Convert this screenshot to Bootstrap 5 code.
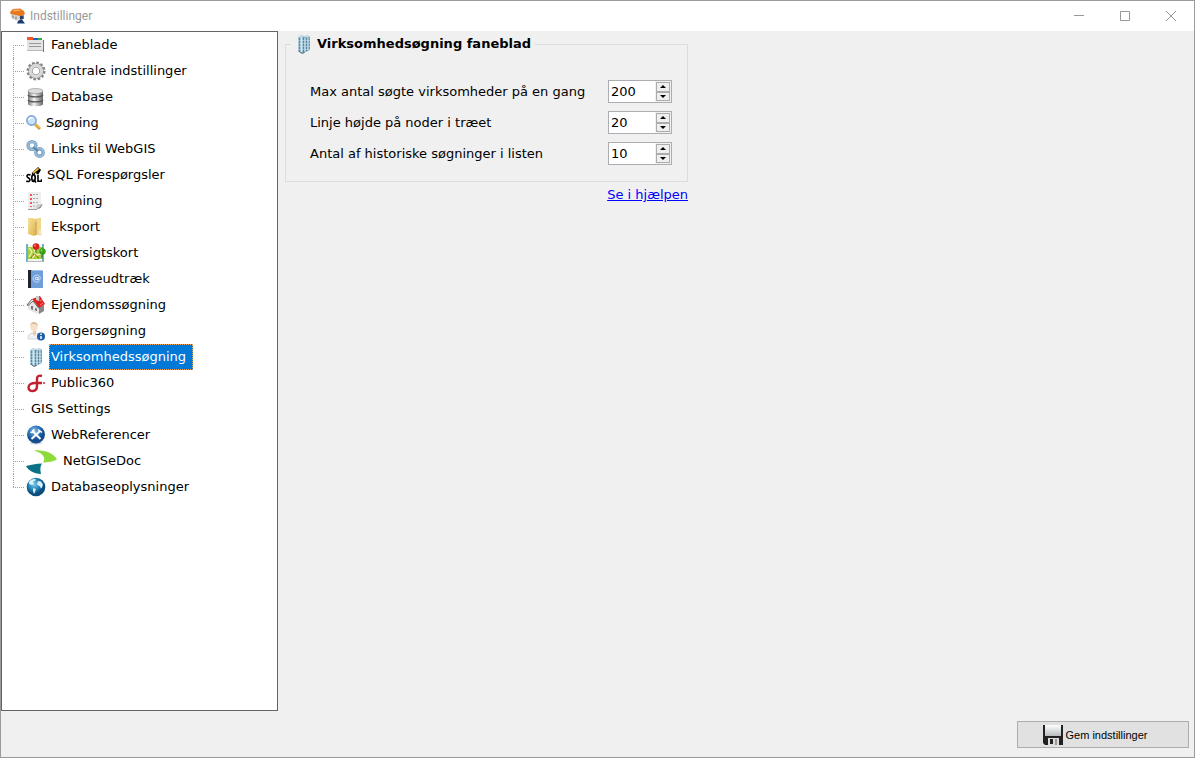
<!DOCTYPE html>
<html lang="da">
<head>
<meta charset="utf-8">
<meta name="viewport" content="width=device-width, initial-scale=1">
<title>Indstillinger</title>
<link href="https://cdn.jsdelivr.net/npm/bootstrap@5.3.0/dist/css/bootstrap.min.css" rel="stylesheet">
<style>
  body { font: 13px/23px "DejaVu Sans", sans-serif; color: #000; background: #f0f0f0; border: 1px solid #9b9b9b; }
  .titlebar { height: 30px; padding-left: 8px; font: 12px/16px Roboto, sans-serif; color: #999; }
  .titlebar h1 { font: inherit; margin: 0 0 0 4px; }
  .winbtn { width: 46px; height: 30px; padding: 0; border: 0; background: none; display: grid; place-items: center; }
  .tree { width: 277px; border: 1px solid #646464; background: #fff; }
  .tree li { height: 26px; padding-left: 24px; position: relative; }
  .tree li::before { content: ""; position: absolute; left: 11px; top: 0; height: 26px; border-left: 1px dotted #a0a0a0; }
  .tree li:first-child::before { top: 13px; height: 13px; }
  .tree li:last-child::before { height: 13px; }
  .tree li::after { content: ""; position: absolute; left: 11px; top: 13px; width: 11px; border-top: 1px dotted #a0a0a0; }
  .tree a { color: #000; text-decoration: none; margin-left: 3px; padding: 0 6px 1px 1px; border: 1px solid transparent; line-height: 23px; white-space: nowrap; }
  .tree a.active { background: #0078d7; color: #fff; border: 1px dotted #f0a050; }
  .content-pane { padding: 1px 0 0 7px; }
  .group { width: 403px; }
  .group fieldset { border: 1px solid #dcdcdc; padding: 0 15px 16px 24px; }
  .group legend { font-size: 13px; line-height: 24px; font-weight: bold; margin: 0 0 24px -19px; padding: 0 4px 0 3px; gap: 3px; }
  .spin { width: 64px; height: 23px; border: 1px solid #abadb3; background: #fff; }
  .spin input { width: 46px; border: 0; padding: 0 0 0 2px; outline: 0; background: none; line-height: 20px; appearance: textfield; -moz-appearance: textfield; }
  .spin input::-webkit-inner-spin-button { appearance: none; -webkit-appearance: none; margin: 0; }
  .spin-btns { width: 16px; padding: 1px; background: #f0f0f0; }
  .spin-btns button { border: 1px solid #acacac; background: #efefef; padding: 0; line-height: 0; display: grid; place-items: center; flex: 1; }
  .help { color: #00f; line-height: 26px; }
  .footbar { height: 46px; padding: 10px 5px 9px; }
  .save { width: 172px; border: 1px solid #adadad; background: #e1e1e1; font: 11px/16px "Liberation Sans", sans-serif; color: #000; gap: 3px; padding: 0 16px 0 0; }
</style>
</head>
<body class="vh-100 d-flex flex-column overflow-hidden">
<svg width="0" height="0" class="position-absolute" aria-hidden="true">
  <defs>
    <linearGradient id="metal"><stop offset="0" stop-color="#777"/><stop offset=".4" stop-color="#f4f4f4"/><stop offset="1" stop-color="#666"/></linearGradient>
    <linearGradient id="gold" x2="1" y2="1"><stop offset="0" stop-color="#f8e39a"/><stop offset="1" stop-color="#dcb24c"/></linearGradient>
    <linearGradient id="shine" x2="0" y2="1"><stop offset="0" stop-color="#fff"/><stop offset="1" stop-color="#b8bcbe"/></linearGradient>
    <radialGradient id="blue" cx=".4" cy=".3"><stop offset="0" stop-color="#8cc0ea"/><stop offset=".6" stop-color="#2f78bd"/><stop offset="1" stop-color="#164c8c"/></radialGradient>
    <radialGradient id="sea" cx=".4" cy=".35"><stop offset="0" stop-color="#7cc9ea"/><stop offset=".6" stop-color="#2586b8"/><stop offset="1" stop-color="#0d4d7d"/></radialGradient>
    <symbol id="towers" viewBox="0 0 20 20">
      <path d="M4 3l3-2 4 1v17l-3 .5L4 17z" fill="#a3c6d7"/><path d="M10 3l3-2 3 1.500V16l-4 2-2-1z" fill="#86b0c5"/>
      <path d="M5.500 4v13M9.500 3v15M12.500 4v13M15 4v12" stroke="#4f8199" stroke-width=".9"/>
      <path d="M7.500 4v14M11 4v13M14 4v12" stroke="#dcebf2" stroke-width=".9"/>
      <path d="M4 3l3-2 4 1-3 1.500zM10 2.500L13 1l3 1.500-3 1z" fill="#c9dde6"/>
      <path d="M4 6.500h12M4 9.500h12M4 12.500h12M4 15.500h12" stroke="#d4e5ed" stroke-width=".5"/>
      <path d="M4.500 17L8 19.300l2.500-.8" stroke="#4a6674" fill="none"/>
    </symbol>
  </defs>
</svg>

<header class="titlebar d-flex align-items-center bg-white flex-shrink-0">
  <svg width="17" height="16" viewBox="0 0 17 16"><path d="M1 4l3-3 7-.5L15 3l1 3-5 3-9-2z" fill="#e8781c"/><path d="M4 2l6-.5 2 1-7 1z" fill="#f9b168"/><path d="M2 6l9 2v5l-5-1-4-3z" fill="#d9d6cf"/><path d="M4 7.500v3M7 8.500v3" stroke="#777"/><path d="M11 8l4-1v4l-4 1z" fill="#8b817a"/><circle cx="12.500" cy="9.500" r="1.800" fill="#20406c"/><path d="M8 15.500c1-3 2-4 5-4l3 4z" fill="#173c78"/></svg>
  <h1 class="me-auto">Indstillinger</h1>
  <button class="winbtn" aria-label="Minimer"><svg width="10" height="10"><path d="M0 4.500h10" stroke="#999"/></svg></button>
  <button class="winbtn" aria-label="Maksimer"><svg width="10" height="10"><path d="M.5.5h9v9h-9z" fill="none" stroke="#999"/></svg></button>
  <button class="winbtn" aria-label="Luk"><svg width="10" height="10"><path d="M0 0l10 10M10 0L0 10" stroke="#999"/></svg></button>
</header>

<main class="d-flex flex-grow-1">
  <nav class="tree flex-shrink-0" aria-label="Indstillinger">
    <ul class="list-unstyled m-0">
      <li class="d-flex align-items-center"><svg width="20" height="20" viewBox="0 0 20 20"><path d="M1 5h16v11H1z" fill="#e4e4e4"/><path d="M1 2h6v3H1z" fill="#f0582a"/><path d="M7 3h5v2H7z" fill="#1e62c8"/><path d="M12 3h4v2h-4z" fill="#2fae48"/><path d="M3 8.500h12M3 11.500h12" stroke="#999"/><path d="M1 15.500h16" stroke="#bbb"/><path d="M17.500 5v12" stroke="#777"/></svg><a href="#">Faneblade</a></li>
      <li class="d-flex align-items-center"><svg width="20" height="20" viewBox="0 0 20 20"><circle cx="10" cy="10" r="8" fill="none" stroke="#858585" stroke-width="3" stroke-dasharray="2.500 1.690"/><circle cx="10" cy="10" r="5.500" fill="none" stroke="#8c8c8c" stroke-width="4.500"/><circle cx="10" cy="10" r="5.500" fill="none" stroke="#d8d8d8" stroke-width="3.400"/></svg><a href="#">Centrale indstillinger</a></li>
      <li class="d-flex align-items-center"><svg width="20" height="20" viewBox="0 0 20 20"><path d="M2 4v13c0 3 15 3 15 0V4z" fill="url(#metal)"/><ellipse cx="9.500" cy="4" rx="7.500" ry="2.500" fill="#ddd" stroke="#999" stroke-width=".7"/><path d="M2 8c1 2.500 14 2.500 15 0M2 13c1 2.500 14 2.500 15 0" fill="none" stroke="#555" stroke-width="1.400"/></svg><a href="#">Database</a></li>
      <li class="d-flex align-items-center"><svg width="15" height="16" viewBox="0 0 15 16"><path d="M9 9l5 5" stroke="#d79b35" stroke-width="3"/><path d="M9 8.500l4.500 4.500" stroke="#f7cf71"/><circle cx="5.500" cy="5.500" r="4.600" fill="#c8e3fa" stroke="#7ea6de" stroke-width="1.600"/><path d="M3 5c0-2 2-3 4-2" stroke="#fff" fill="none" stroke-width="1.200"/></svg><a href="#">Søgning</a></li>
      <li class="d-flex align-items-center"><svg width="20" height="20" viewBox="0 0 20 20" fill="none"><circle cx="6" cy="6.500" r="3.900" stroke="#7ca5c8" stroke-width="3.400"/><circle cx="13.500" cy="13.500" r="3.700" stroke="#7ca5c8" stroke-width="3.400"/><circle cx="6" cy="6.500" r="4" stroke="#a8c7df"/><circle cx="13.500" cy="13.500" r="4" stroke="#a8c7df"/><path d="M7 8l5 4" stroke="#5f86a8" stroke-width="2"/></svg><a href="#">Links til WebGIS</a></li>
      <li class="d-flex align-items-center"><svg width="16" height="16" viewBox="0 0 16 16" fill="none" stroke="#000" stroke-width="1.600"><path d="M4.500 8C2.500 7 .8 8 1 9.500c.2 1.500 3 1.500 3 3.200C4 14.500 2 15 .3 14"/><ellipse cx="7.500" cy="11" rx="1.700" ry="3.400"/><path d="M7.500 12.500l2.500 3M12 8v6.200h3.500v-2"/><path d="M6.500 7L13 1M11 7l3-5" stroke-width="2.600"/><path d="M7 6l5.500-4.500" stroke="#eebd36" stroke-width="1.700"/></svg><a href="#">SQL Forespørgsler</a></li>
      <li class="d-flex align-items-center"><svg width="20" height="20" viewBox="0 0 20 20"><path d="M2 1h13v13l-5 5H2z" fill="#eee"/><path d="M2 18.500h9" stroke="#999"/><path d="M11 18c3 0 5-2 5.500-5L13 14z" fill="#888"/><path d="M9 18l2-5 5 .5-3 3z" fill="#d0d0d0"/><path d="M5 3v13" stroke="#e33" stroke-width="1.600" stroke-dasharray="2 2"/><path d="M7 3.500h6M7 7.500h5M7 11.500h6M7 15h2" stroke="#aaa" stroke-dasharray="2 1"/></svg><a href="#">Logning</a></li>
      <li class="d-flex align-items-center"><svg width="20" height="20" viewBox="0 0 20 20"><path d="M7 2l8-1v15l-5 2z" fill="#e9cc77"/><path d="M2 1h5l3 4v13l-2 1-6-2z" fill="url(#gold)"/><path d="M10 5v13" stroke="#c9a04a"/><path d="M11 2h4v15l-4 1z" fill="#f0d78c"/><path d="M13 14v4h2v-5" fill="#fff" stroke="#d9c48a" stroke-width=".7"/></svg><a href="#">Eksport</a></li>
      <li class="d-flex align-items-center"><svg width="20" height="20" viewBox="0 0 20 20"><path d="M1 2h16v16H1z" fill="#f0f4ea"/><path d="M2 4h15v12H2z" fill="#9bd238"/><path d="M3 5l3 4-3 5M7 4l3 8 6-1M6 15l4-4" stroke="#f4edb0" stroke-width="1.300" fill="none"/><path d="M5 15l3-4 3 2 2 3" stroke="#d52c1f" stroke-dasharray="2 1" fill="none"/><path d="M1 1v18M17 1v18" stroke="#1580a8" stroke-width="1.200"/><path d="M1 18.500h16" stroke="#bbb"/><path d="M10 5v5M16 9v6" stroke="#555"/><circle cx="10" cy="3.500" r="3.300" fill="#d91e1e"/><circle cx="16.500" cy="8.500" r="3.200" fill="#3c9d18"/><circle cx="9" cy="2.500" r="1" fill="#f58a7c"/><circle cx="15.500" cy="7.500" r="1" fill="#8fd865"/></svg><a href="#">Oversigtskort</a></li>
      <li class="d-flex align-items-center"><svg width="20" height="20" viewBox="0 0 20 20"><path d="M2 1h15v18H2z" fill="#6f9edb"/><path d="M2 1h3v18H2z" fill="#1d2430"/><path d="M6 1.500h11" stroke="#a2c3ed"/><circle cx="10.700" cy="9.500" r="1.300" fill="none" stroke="#fff"/><path d="M12.200 8v3c2 .5 2-1 2-2 0-4-7-4-7 .7 0 3.500 4 4 6 2.800" fill="none" stroke="#dce9fa" stroke-width=".9"/></svg><a href="#">Adresseudtræk</a></li>
      <li class="d-flex align-items-center"><svg width="20" height="20" viewBox="0 0 20 20"><path d="M2 9l5-3 6 7v6l-6-2-5-3z" fill="#e4e4e4"/><path d="M13 12l5-2v6l-5 3z" fill="#888"/><path d="M6 4l8-3 5 8-6 4z" fill="#dc2024"/><path d="M6 4l-5 6 1 .5L7 6l6 7.500" fill="none" stroke="#666" stroke-width="1"/><path d="M10 1h3v5l-3-1z" fill="#ccc"/><path d="M13 1l1 .5V6h-1z" fill="#777"/><path d="M14 6l2-1M14 10l3-2" stroke="#ff8580"/><path d="M5 11h2v4l-2-1zM9 13l2 .5V16l-2-.5z" fill="#777"/></svg><a href="#">Ejendomssøgning</a></li>
      <li class="d-flex align-items-center"><svg width="20" height="20" viewBox="0 0 20 20"><path d="M2 18c0-5 2-6 6-6s6 2 6 6z" fill="#f0f2f5" stroke="#c2c8d0" stroke-width=".7"/><path d="M7 10h3v3l-1.500 2L7 13z" fill="#edc7a2"/><ellipse cx="8" cy="6" rx="3.700" ry="4.600" fill="#f7e0c9"/><path d="M4 6c-.5-7 8-6 8-1-2-2-5-2.500-7-1.500z" fill="#d6c09c"/><circle cx="15" cy="15.500" r="4" fill="#1e5da6"/><path d="M15 12.500V14M15 15v3" stroke="#fff" stroke-width="1.500"/></svg><a href="#">Borgersøgning</a></li>
      <li class="d-flex align-items-center"><svg width="20" height="20"><use href="#towers"/></svg><a href="#" class="active" aria-current="page">Virksomhedssøgning</a></li>
      <li class="d-flex align-items-center"><svg width="20" height="20" viewBox="0 0 20 20" fill="none" stroke="#c21f30" stroke-width="2.400"><path d="M16 3c-3-1-5 0-5 3v7c0 6.500-8.500 6.500-8.500 1.500 0-3.500 3-4.500 7-4.500H16"/><circle cx="18" cy="10" r="1" stroke="none" fill="#c21f30"/></svg><a href="#">Public360</a></li>
      <li class="d-flex align-items-center"><a href="#">GIS Settings</a></li>
      <li class="d-flex align-items-center"><svg width="20" height="20" viewBox="0 0 20 20"><ellipse cx="10" cy="18" rx="6" ry="1.500" fill="#c6d3df"/><circle cx="10" cy="9.500" r="9" fill="url(#blue)"/><path d="M6 5.500l8.500 8.500M14 6l-8.500 8" stroke="#fff" stroke-width="2"/><path d="M4.500 7c2 1.500 4-.5 3-3M12 4.500l4 3" stroke="#fff" stroke-width="1.500" fill="none"/></svg><a href="#">WebReferencer</a></li>
      <li class="d-flex align-items-center"><svg width="32" height="26" viewBox="0 0 32 26"><path d="M8 2.500c11-1 20 3 23 9-4 2-8 3-14 3 3-4 1-9-9-12z" fill="#8ddc3c"/><path d="M0 18c4-1 10-2.500 16-2.500-2 3-2 6.500-1 10.500C8 26 2 22 0 18z" fill="#0b7285"/></svg><a href="#">NetGISeDoc</a></li>
      <li class="d-flex align-items-center"><svg width="20" height="20" viewBox="0 0 20 20"><circle cx="10" cy="10" r="9.300" fill="url(#sea)"/><path d="M3 5c2-3 5-3 6-3l1 1-3 2 1 2-2 1-3-1zM7 11l3 1-1 3-1 2-1-3zM12 4l3 .5 2 3-1 3-1 1-1-2-3-2z" fill="#d8eff6"/></svg><a href="#">Databaseoplysninger</a></li>
    </ul>
  </nav>

  <section class="content-pane flex-grow-1">
    <form class="group d-flex flex-column">
      <fieldset>
        <legend class="float-none w-auto d-flex align-items-center"><svg width="20" height="20"><use href="#towers"/></svg>Virksomhedsøgning faneblad</legend>
        <div class="d-grid gap-2">
          <div class="d-flex justify-content-between align-items-center">
            <label for="maxAntal">Max antal søgte virksomheder på en gang</label>
            <div class="spin d-flex"><input type="number" id="maxAntal" value="200"><span class="spin-btns d-flex flex-column"><button type="button" aria-label="Op"><svg width="6" height="3"><path d="M0 3l3-3 3 3z"/></svg></button><button type="button" aria-label="Ned"><svg width="6" height="3"><path d="M0 0l3 3 3-3z"/></svg></button></span></div>
          </div>
          <div class="d-flex justify-content-between align-items-center">
            <label for="linjeHojde">Linje højde på noder i træet</label>
            <div class="spin d-flex"><input type="number" id="linjeHojde" value="20"><span class="spin-btns d-flex flex-column"><button type="button" aria-label="Op"><svg width="6" height="3"><path d="M0 3l3-3 3 3z"/></svg></button><button type="button" aria-label="Ned"><svg width="6" height="3"><path d="M0 0l3 3 3-3z"/></svg></button></span></div>
          </div>
          <div class="d-flex justify-content-between align-items-center">
            <label for="historik">Antal af historiske søgninger i listen</label>
            <div class="spin d-flex"><input type="number" id="historik" value="10"><span class="spin-btns d-flex flex-column"><button type="button" aria-label="Op"><svg width="6" height="3"><path d="M0 3l3-3 3 3z"/></svg></button><button type="button" aria-label="Ned"><svg width="6" height="3"><path d="M0 0l3 3 3-3z"/></svg></button></span></div>
          </div>
        </div>
      </fieldset>
      <a href="#" class="help align-self-end">Se i hjælpen</a>
    </form>
  </section>
</main>

<footer class="footbar d-flex justify-content-end flex-shrink-0">
  <button type="button" class="save d-flex align-items-center justify-content-center"><svg width="20" height="20" viewBox="0 0 20 20"><path d="M0 0h20v20H2l-2-2z" fill="#222"/><path d="M2 0h16v11H2z" fill="url(#shine)"/><path d="M5 13h11v7H5z" fill="#ddd"/><path d="M7 14h3v5H7z" fill="#222"/><path d="M12 14h2v6h-2z" fill="#999"/></svg>Gem indstillinger</button>
</footer>
<script src="https://cdn.jsdelivr.net/npm/bootstrap@5.3.0/dist/js/bootstrap.bundle.min.js"></script>
</body>
</html>
